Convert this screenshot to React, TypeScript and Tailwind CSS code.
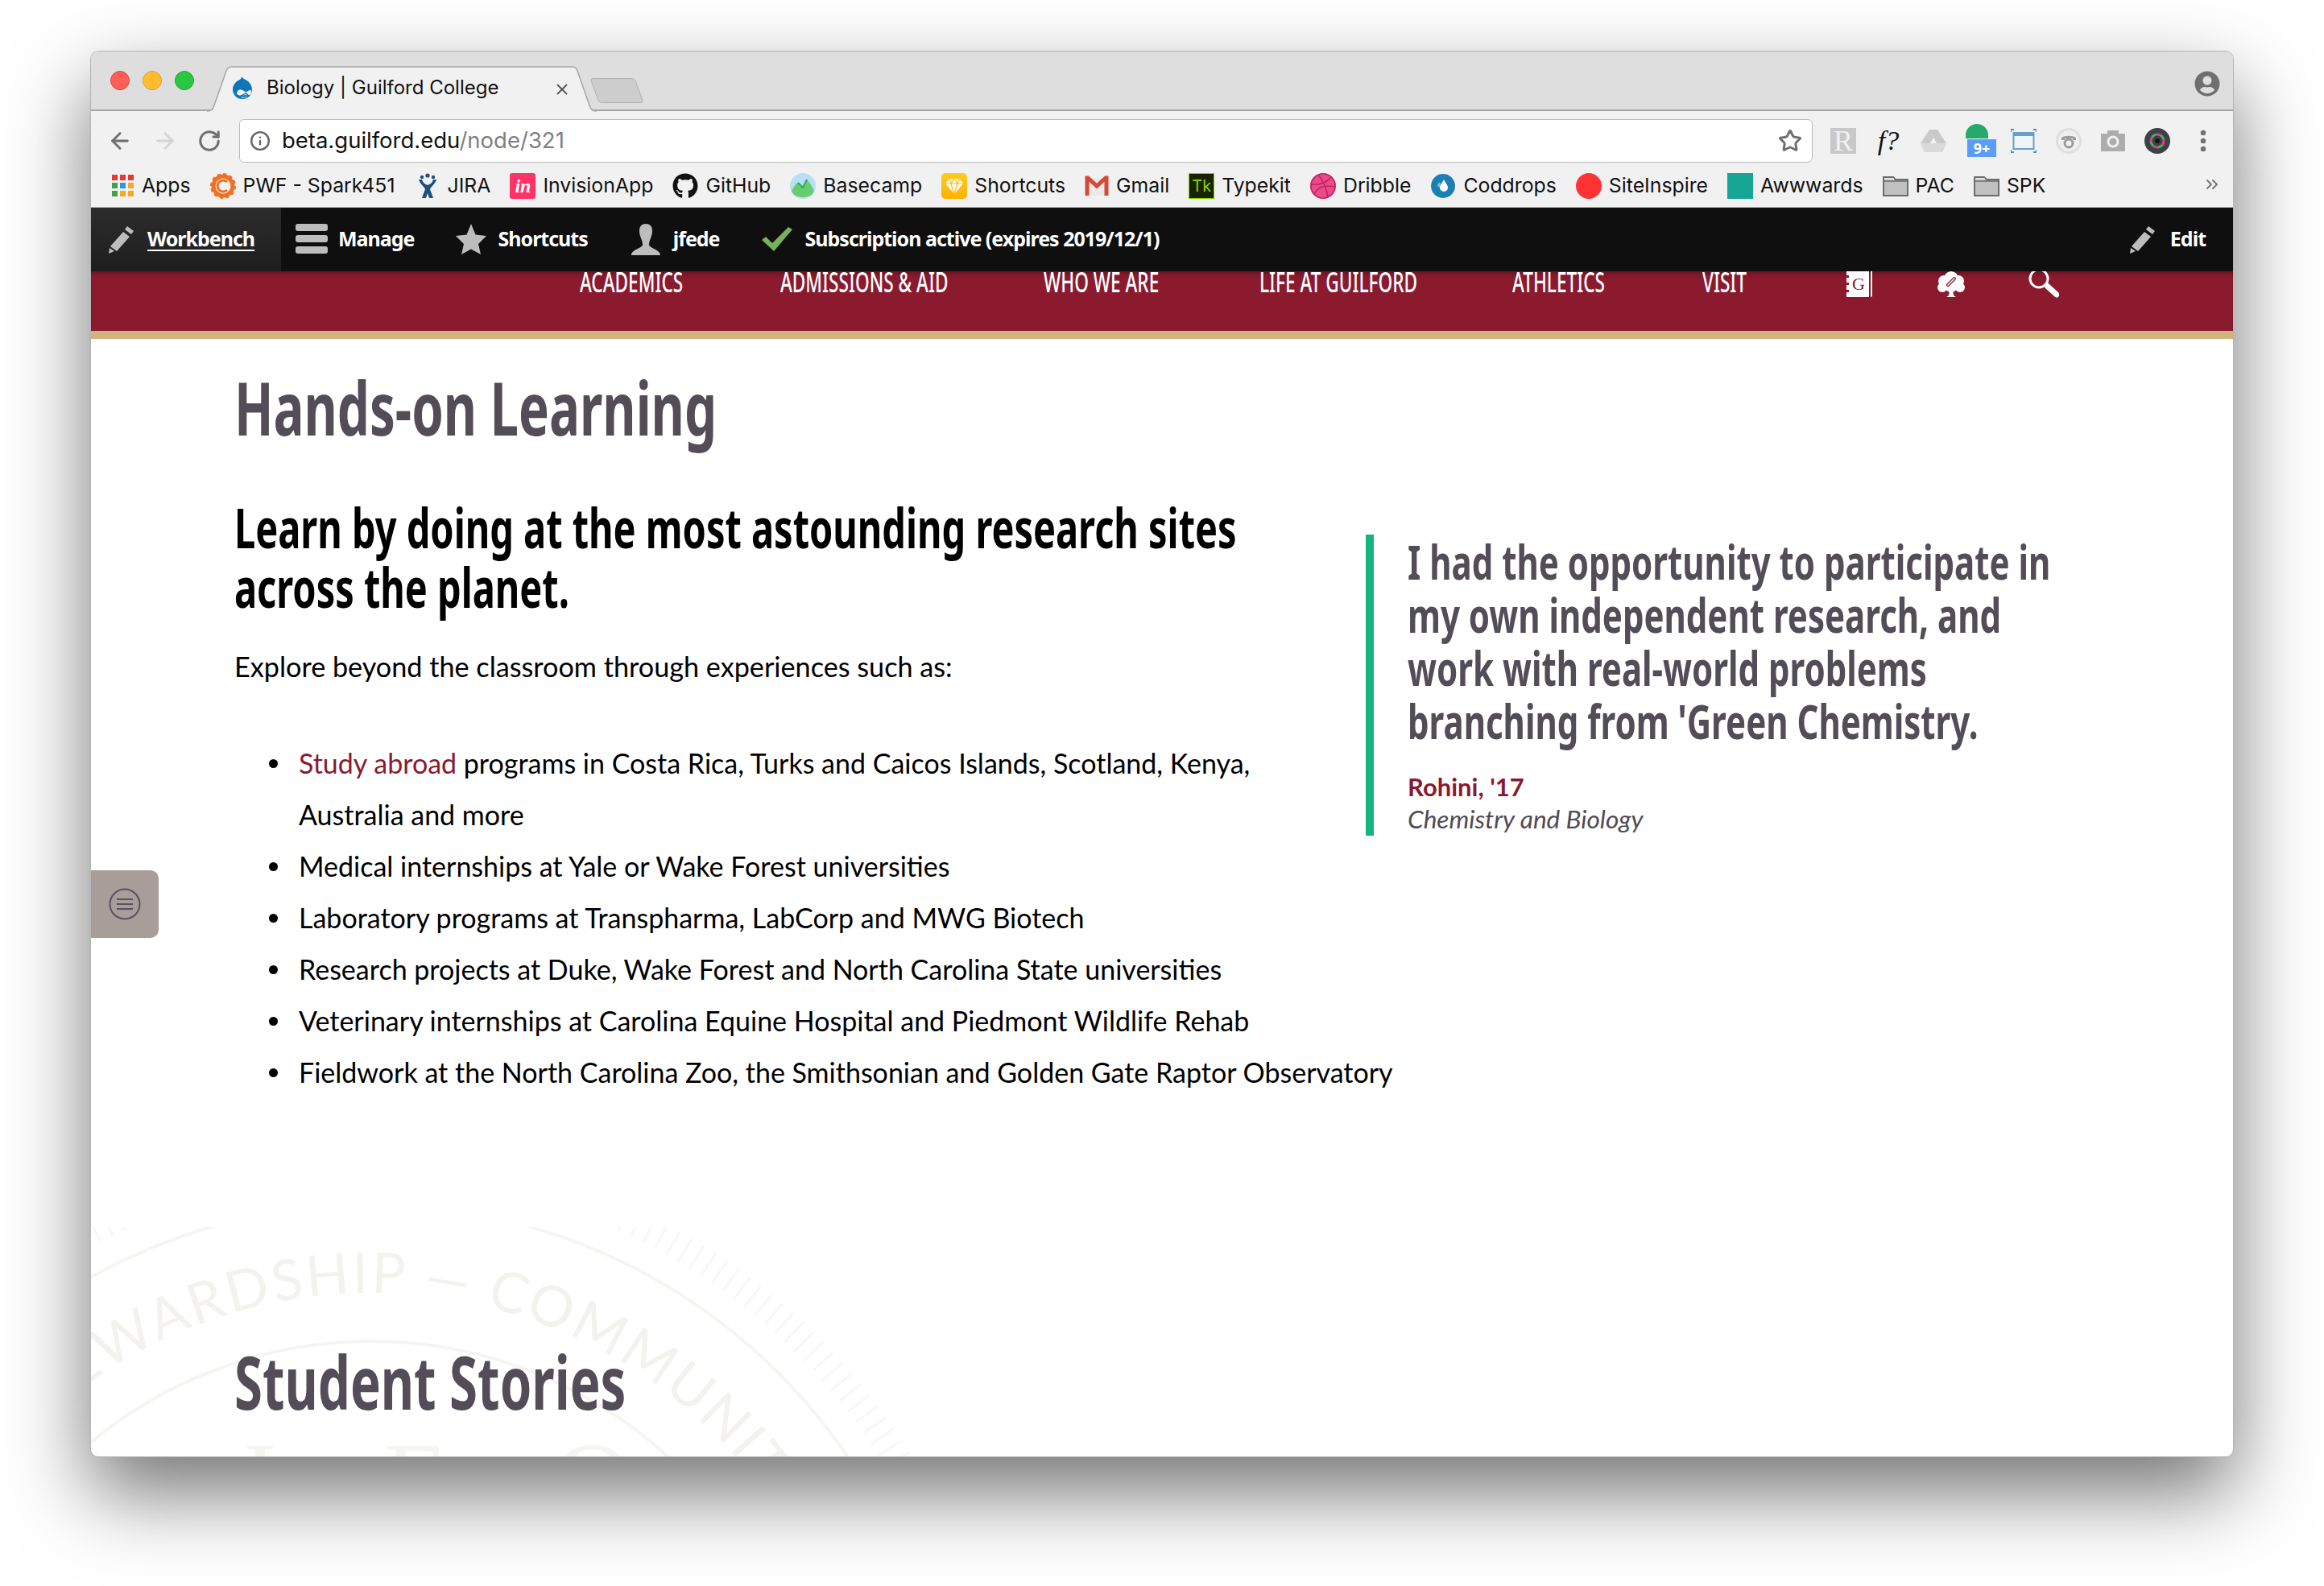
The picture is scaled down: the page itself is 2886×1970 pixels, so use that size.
import { ArrowLeft, ArrowRight, RotateCw, Info, Star, X, ChevronsRight, EllipsisVertical } from 'lucide-react'
import { FaDrupal, FaGithub, FaUserCircle } from 'react-icons/fa'

const chrome = "font-['Inter','Liberation_Sans',sans-serif]"
const cond = "font-['Noto_Sans','Open_Sans',sans-serif] origin-left whitespace-nowrap"
const body = "font-['Lato','Noto_Sans',sans-serif]"

const AppsIcon = () => (
  <svg width="28" height="32" viewBox="0 0 28 32">
    {[
      ['#e53935', '#e53935', '#e53935'],
      ['#43a047', '#2196f3', '#f9a825'],
      ['#43a047', '#f9a825', '#f9a825'],
    ].map((row, r) =>
      row.map((c, i) => <rect key={`${r}-${i}`} x={i * 10} y={2 + r * 10} width="7" height="7" fill={c} />),
    )}
  </svg>
)

const GearIcon = () => (
  <svg width="32" height="32" viewBox="0 0 32 32">
    <circle cx="16" cy="16" r="12" fill="none" stroke="#f26f21" strokeWidth="5" />
    <circle cx="16" cy="16" r="14" fill="none" stroke="#f26f21" strokeWidth="4" strokeDasharray="4 3.3" />
    <path d="M21 11a7 7 0 1 0 0 10" fill="none" stroke="#f26f21" strokeWidth="3" />
  </svg>
)

const JiraIcon = () => (
  <svg width="32" height="32" viewBox="0 0 32 32">
    <circle cx="16" cy="3" r="2.600" fill="#1d4f7c" />
    <circle cx="9" cy="5" r="2.200" fill="#1d4f7c" />
    <circle cx="23" cy="5" r="2.200" fill="#1d4f7c" />
    <path d="M5 8c2 6 6 8 8 12l-4 11h5l2-6 2 6h5l-4-11c2-4 6-6 8-12h-4c-1 4-4 6-7 7-3-1-6-3-7-7z" fill="#1d4f7c" />
  </svg>
)

const BasecampIcon = () => (
  <svg width="32" height="32" viewBox="0 0 32 32">
    <ellipse cx="16" cy="16" rx="16" ry="16" fill="#b9def7" />
    <path d="M2 22c3-5 6-10 8-10l6 6 5-10c3 3 7 9 9 14-2 6-8 8-14 8S4 28 2 22z" fill="#66cd70" />
    <path d="M10 12l6 6 5-10" fill="none" stroke="#2eaa5a" strokeWidth="2" />
  </svg>
)

const SketchIcon = () => (
  <div className="w-8 h-8 rounded-[5px] bg-gradient-to-b from-[#ffcb1f] to-[#ffb000] flex items-center justify-center">
    <svg width="24" height="22" viewBox="0 0 24 22">
      <path d="M6 2h12l5 6-11 13L1 8z" fill="#fff" />
      <path d="M1 8h22M6 2l2 6 4 13 4-13 2-6M8 8l4-6 4 6" fill="none" stroke="#ffbb00" strokeWidth="1.2" />
    </svg>
  </div>
)

const GmailIcon = () => (
  <svg width="30" height="32" viewBox="0 0 30 32">
    <rect x="1" y="6" width="28" height="22" fill="#e9e9e9" />
    <path d="M3 28V6h1l11 10L26 6h1v22" fill="none" stroke="#d34836" strokeWidth="5" />
  </svg>
)

const DribbbleIcon = () => (
  <svg width="32" height="32" viewBox="0 0 32 32">
    <circle cx="16" cy="16" r="16" fill="#ea4c89" />
    <g fill="none" stroke="#c32361" strokeWidth="1.6">
      <circle cx="16" cy="16" r="15" />
      <path d="M10 2c6 7 10 16 12 28M2 14c10 1 18-2 24-9M5 26c4-8 12-12 25-9" />
    </g>
  </svg>
)

const CodropsIcon = () => (
  <svg width="32" height="32" viewBox="0 0 32 32">
    <circle cx="16" cy="16" r="15" fill="#1b7fb4" />
    <path d="M17 8c2 4 5 7 5 10a5 5 0 0 1-10 0c0-3 3-6 5-10z" fill="#fff" />
    <path d="M12 11c1 2 1 4 0 7-2-1-3-2-3-3 0-2 2-3 3-4z" fill="#7bbbe0" />
  </svg>
)

const FolderIcon = () => (
  <svg width="32" height="32" viewBox="0 0 32 32">
    <path d="M1 28V5h12l3 3h15v20z" fill="#c0c0c0" stroke="#6d6d6d" strokeWidth="2" />
    <path d="M1 10h30" stroke="#6d6d6d" strokeWidth="1.5" />
    <path d="M2 7h12" stroke="#efefef" strokeWidth="1.5" />
  </svg>
)

const bookmarks = [
  { label: 'Apps', icon: <AppsIcon /> },
  { label: 'PWF - Spark451', icon: <GearIcon /> },
  { label: 'JIRA', icon: <JiraIcon /> },
  {
    label: 'InvisionApp',
    icon: (
      <div className="w-8 h-8 rounded-[3px] bg-[#ff3366] text-white flex items-center justify-center italic font-bold font-['Liberation_Serif',serif] text-[24px] leading-none">
        in
      </div>
    ),
  },
  { label: 'GitHub', icon: <FaGithub size={32} color="#111" /> },
  { label: 'Basecamp', icon: <BasecampIcon /> },
  { label: 'Shortcuts', icon: <SketchIcon /> },
  { label: 'Gmail', icon: <GmailIcon /> },
  {
    label: 'Typekit',
    icon: (
      <div className="w-8 h-8 bg-[#1a2200] border border-[#7fd000] text-[#86d900] flex items-center justify-center text-[20px] leading-none">
        Tk
      </div>
    ),
  },
  { label: 'Dribble', icon: <DribbbleIcon /> },
  { label: 'Coddrops', icon: <CodropsIcon /> },
  { label: 'SiteInspire', icon: <div className="w-8 h-8 rounded-full bg-[#ff3333]" /> },
  { label: 'Awwwards', icon: <div className="w-8 h-8 bg-[#17a695]" /> },
  { label: 'PAC', icon: <FolderIcon /> },
  { label: 'SPK', icon: <FolderIcon /> },
]

const Pencil = ({ color = '#bdbdbd' }: { color?: string }) => (
  <svg width="36" height="36" viewBox="0 0 36 36">
    <path d="M25 2l8 6-3 4-8-6zM20 9l8 6-16 18-8-6z" fill={color} />
    <path d="M3 29l6 4-7 3z" fill={color} />
  </svg>
)

const extensions = [
  <div key="r" className="w-8 h-8 bg-[#c8c8c8] text-[#f1f1f1] font-['Liberation_Serif',serif] text-[36px] leading-[33px] text-center">R</div>,
  <div key="f" className="w-8 text-center font-['Liberation_Serif',serif] italic text-[34px] leading-none text-[#111] whitespace-nowrap">f?</div>,
  <svg key="d" width="32" height="28" viewBox="0 0 32 28">
    <path d="M11 0h10l11 17-5 11H5L0 17z" fill="#c9c9c9" />
    <path d="M16 10l-5 8h10z" fill="#f1f1f1" />
    <path d="M0 17l5 11h22l5-11z" fill="#dadada" />
  </svg>,
  <div key="g" className="relative w-8 h-[42px]">
    <div className="absolute left-0 top-0 w-[28px] h-[18px] rounded-t-full bg-[#26a96c]" />
    <div className="absolute left-[2px] top-[19px] w-9 h-[22px] bg-[#5a9cf8] text-white text-[18px] leading-[22px] font-bold text-center">9+</div>
  </div>,
  <svg key="w" width="32" height="30" viewBox="0 0 32 30">
    <path d="M0 4V1h4M28 1h4v3M32 26v3h-4M4 29H0v-3" fill="none" stroke="#4b93c3" strokeWidth="2" />
    <rect x="3.500" y="5" width="25" height="20" fill="#eef4f8" stroke="#6a9fc5" strokeWidth="2" />
    <rect x="3" y="5" width="26" height="4" fill="#6a9fc5" />
  </svg>,
  <svg key="p" width="32" height="32" viewBox="0 0 32 32">
    <circle cx="16" cy="16" r="16" fill="#dedede" />
    <circle cx="16" cy="16" r="13" fill="#efefef" />
    <path d="M7 12c4-3 14-3 18 0v3h-4v-2h-10v2H7z" fill="#9c9c9c" />
    <circle cx="16" cy="19" r="5" fill="none" stroke="#9c9c9c" strokeWidth="3" />
  </svg>,
  <svg key="c" width="30" height="28" viewBox="0 0 30 28">
    <path d="M8 1h14v4h8v22H0V5h8z" fill="#adadad" />
    <circle cx="15" cy="15" r="6" fill="none" stroke="#f1f1f1" strokeWidth="3" />
  </svg>,
  <svg key="l" width="32" height="32" viewBox="0 0 32 32">
    <circle cx="16" cy="16" r="16" fill="#3e4148" />
    <circle cx="16" cy="16" r="8" fill="none" stroke="#e23d8d" strokeWidth="3" strokeDasharray="6 6" />
    <circle cx="16" cy="16" r="8" fill="none" stroke="#39c14b" strokeWidth="3" strokeDasharray="6 6" strokeDashoffset="6" />
    <circle cx="16" cy="16" r="3" fill="#141414" />
  </svg>,
]

const navItems = [
  { label: 'ACADEMICS', width: 'w-[127px]' },
  { label: 'ADMISSIONS & AID', width: 'w-[206px]' },
  { label: 'WHO WE ARE', width: 'w-[146px]' },
  { label: 'LIFE AT GUILFORD', width: 'w-[193px]' },
  { label: 'ATHLETICS', width: 'w-[114px]' },
  { label: 'VISIT', width: 'w-[55px]' },
]

const listItems = [
  <>
    <span className="text-[#8b1a2f]">Study abroad</span> programs in Costa Rica, Turks and Caicos Islands, Scotland, Kenya,
    <br />
    Australia and more
  </>,
  'Medical internships at Yale or Wake Forest universities',
  'Laboratory programs at Transpharma, LabCorp and MWG Biotech',
  'Research projects at Duke, Wake Forest and North Carolina State universities',
  'Veterinary internships at Carolina Equine Hospital and Piedmont Wildlife Rehab',
  'Fieldwork at the North Carolina Zoo, the Smithsonian and Golden Gate Raptor Observatory',
]

export default function App() {
  return (
    <div className="w-[2886px] h-[1970px] bg-white pt-[63px] pl-[112px] overflow-hidden">
      <div className="relative w-[2662px] h-[1747px] rounded-[10px] overflow-hidden bg-white border border-[#b5b5b5] shadow-[0_44px_100px_rgba(0,0,0,0.55)]">
        {/* Tab strip */}
        <div className="relative h-[74px] bg-[#dedede] border-b-2 border-[#a5a5a5] flex items-center">
          <div className="flex gap-4 pl-[24px]">
            <div className="w-6 h-6 rounded-full bg-[#ff5f57] border border-[#e0443e]" />
            <div className="w-6 h-6 rounded-full bg-[#ffbd2e] border border-[#dea123]" />
            <div className="w-6 h-6 rounded-full bg-[#28c940] border border-[#1aab29]" />
          </div>
          <svg className="absolute left-[143px] top-[18px]" width="486" height="57" viewBox="0 0 486 57">
            <path d="M1 56C8 56 9 52 11 46L25 6C26 2 28 1 32 1H454C458 1 460 2 461 6L475 46C477 52 478 56 485 56" fill="#f1f1f1" stroke="#a5a5a5" strokeWidth="1.5" />
          </svg>
          <div className={`absolute left-[172px] top-[27px] flex items-center h-[36px] ${chrome}`}>
            <FaDrupal size={32} color="#0c76b8" />
            <span className="ml-[14px] text-[24px] text-[#111] whitespace-nowrap">Biology | Guilford College</span>
          </div>
          <X className="absolute left-[574px] top-[36px] text-[#555]" size={22} strokeWidth={2} />
          <div className="absolute left-[625px] top-[33px] w-[56px] h-[31px] bg-[#cdcdcd] border border-[#b0b0b0] rounded-[4px] skew-x-[20deg]" />
          <FaUserCircle className="absolute left-[2612px] top-[24px] text-[#6f6f6f]" size={32} />
        </div>

        {/* Address bar */}
        <div className="h-[74px] bg-[#f1f1f1] flex items-center pl-[20px] pr-[20px]">
          <ArrowLeft className="text-[#6f6f6f]" size={32} strokeWidth={2.2} />
          <ArrowRight className="ml-[24px] text-[#d4d4d4]" size={32} strokeWidth={2.2} />
          <RotateCw className="ml-[24px] text-[#6f6f6f]" size={30} strokeWidth={2.4} />
          <div className={`ml-[22px] w-[1956px] h-[54px] bg-white rounded-[6px] border border-[#bcbcbc] flex items-center pl-[12px] pr-[12px] ${chrome}`}>
            <Info className="text-[#666]" size={26} strokeWidth={2.2} />
            <span className="ml-[14px] text-[27.500px] text-[#111]">
              beta.guilford.edu<span className="text-[#808080]">/node/321</span>
            </span>
            <Star className="ml-auto text-[#6f6f6f]" size={30} strokeWidth={2.4} />
          </div>
          <div className="ml-[22px] flex items-center gap-[24px]">{extensions}</div>
          <EllipsisVertical className="ml-[24px] text-[#6f6f6f]" size={34} strokeWidth={2.6} />
        </div>

        {/* Bookmarks */}
        <div className={`relative h-[46px] pb-[8px] bg-[#f1f1f1] border-b border-[#b5b5b5] flex items-center pl-[26px] gap-[24px] text-[24.800px] text-[#111] ${chrome}`}>
          {bookmarks.map((b) => (
            <div key={b.label} className="flex items-center gap-[9px] whitespace-nowrap">
              {b.icon}
              <span>{b.label}</span>
            </div>
          ))}
          <ChevronsRight className="absolute left-[2622px] top-[5px] text-[#777]" size={24} />
        </div>

        {/* Admin toolbar */}
        <div className={`h-[79px] pb-[2px] bg-[#0f0f0f] flex items-center text-white font-bold text-[25px] tracking-[-1px] font-['Noto_Sans',sans-serif]`}>
          <div className="h-[79px] -mb-[2px] w-[236px] bg-gradient-to-b from-[#2c2c2c] to-[#1e1e1e] flex items-center pl-[20px] pb-[2px] gap-[14px]">
            <Pencil />
            <span className="underline underline-offset-4">Workbench</span>
          </div>
          <div className="ml-[18px] flex flex-col gap-[5px]">
            <div className="w-[40px] h-[9px] rounded-[3px] bg-[#bdbdbd]" />
            <div className="w-[40px] h-[9px] rounded-[3px] bg-[#bdbdbd]" />
            <div className="w-[40px] h-[9px] rounded-[3px] bg-[#bdbdbd]" />
          </div>
          <span className="ml-[13px]">Manage</span>
          <svg className="ml-[50px]" width="40" height="40" viewBox="0 0 40 40">
            <path d="M20 1l5.5 13.5L39 16l-10 10 3 13-12-6.500L8 39l3-13L1 16l13.500-1.500z" fill="#bdbdbd" />
          </svg>
          <span className="ml-[14px]">Shortcuts</span>
          <svg className="ml-[53px]" width="38" height="40" viewBox="0 0 38 40">
            <path d="M19 1c6 0 8 4 8 9 0 7-4 11-4 17 0 4 14 6 14 13H1c0-7 14-9 14-13 0-6-4-10-4-17 0-5 2-9 8-9z" fill="#bdbdbd" />
          </svg>
          <span className="ml-[15px]">jfede</span>
          <svg className="ml-[52px]" width="38" height="30" viewBox="0 0 38 30">
            <path d="M0 16l5-4 8 8L33 0l5 3-23 27z" fill="#77b259" />
          </svg>
          <span className="ml-[16px]">Subscription active (expires 2019/12/1)</span>
          <div className="ml-auto mr-[34px] flex items-center gap-[16px]">
            <Pencil />
            <span>Edit</span>
          </div>
        </div>

        {/* Site nav */}
        <div className="h-[74px] bg-[#8b1a2f] shadow-[inset_0_6px_6px_-4px_rgba(0,0,0,0.35)] flex items-start pl-[607px] gap-[121.600px] text-white text-[34px] leading-[26px]">
          {navItems.map((n) => (
            <div key={n.label} className={n.width}>
              <div className={`${cond} scale-x-[0.665] font-medium`}>{n.label}</div>
            </div>
          ))}
          <div className="flex items-start gap-[78px]">
            <svg width="36" height="32" viewBox="0 0 36 32">
              <rect x="2" y="0" width="28" height="32" fill="#fff" />
              <path d="M32 0h2v30c0 1-1 2-2 2z" fill="#fff" />
              <g fill="#8b1a2f">
                <rect x="0" y="5" width="5" height="3" />
                <rect x="0" y="14" width="5" height="3" />
                <rect x="0" y="23" width="5" height="3" />
              </g>
              <text x="17" y="23" textAnchor="middle" fill="#8b1a2f" fontSize="22" fontFamily="Liberation Serif, serif">G</text>
            </svg>
            <svg width="36" height="32" viewBox="0 0 36 32">
              <g fill="#fff">
                <circle cx="18" cy="9" r="9" />
                <circle cx="9" cy="12" r="7" />
                <circle cx="27" cy="12" r="7" />
                <circle cx="7" cy="20" r="6" />
                <circle cx="29" cy="20" r="6" />
                <circle cx="18" cy="18" r="8" />
                <path d="M16 24h4l1 6 3 2H12l3-2z" />
              </g>
              <path d="M14 17l8-8" stroke="#8b1a2f" strokeWidth="4" fill="none" strokeLinecap="round" />
              <path d="M14 17l8-8" stroke="#fff" strokeWidth="1.500" fill="none" strokeLinecap="round" />
            </svg>
            <svg width="38" height="34" viewBox="0 0 38 34">
              <circle cx="13" cy="9" r="11" fill="none" stroke="#fff" strokeWidth="3" />
              <path d="M23 18l12 11" stroke="#fff" strokeWidth="7" strokeLinecap="round" />
            </svg>
          </div>
        </div>
        <div className="h-[10px] bg-[#cfb47e]" />

        {/* Page body */}
        <div className="relative h-[1390px]">
          <svg className="absolute left-0 top-[1103px]" width="1200" height="290" viewBox="112 1523 1200 290">
            <g fill="none" stroke="#f6f5f2" strokeWidth="4">
              <circle cx="460" cy="2210" r="545" />
              <circle cx="460" cy="2210" r="715" />
              <circle cx="460" cy="2210" r="765" strokeWidth="34" strokeDasharray="3 14" stroke="#f8f7f5" />
            </g>
            <defs>
              <path id="seal" d="M-145 2210a605 605 0 0 1 1210 0" />
            </defs>
            <text fill="#f3f2ef" fontSize="70" letterSpacing="3" fontFamily="Lato, sans-serif">
              <textPath href="#seal" startOffset="25%">STEWARDSHIP — COMMUNITY</textPath>
            </text>
            <text fill="#f6f5f2" fontSize="130" fontFamily="Liberation Serif, serif" x="300" y="1880" letterSpacing="50">I E O</text>
          </svg>

          <div className="relative pl-[178px]">
            <h1 className={`${cond} scale-x-[0.69] pt-[25px] h-[156px] text-[92px] leading-[120px] font-bold text-[#524d57]`}>Hands-on Learning</h1>
            <div className="flex">
              <div className="w-[1405px] shrink-0">
                <h2 className={`${cond} scale-x-[0.69] mt-[41px] text-[68px] leading-[74px] font-bold text-black`}>
                  Learn by doing at the most astounding research sites
                  <br />
                  across the planet.
                </h2>
                <p className={`${body} mt-[30px] text-[34.200px] leading-[64px] text-black whitespace-nowrap`}>
                  Explore beyond the classroom through experiences such as:
                </p>
                <ul className={`${body} mt-[56px] pl-[80px] text-[34px] leading-[64px] text-black whitespace-nowrap`}>
                  {listItems.map((item, i) => (
                    <li key={i} className="relative">
                      <span className="absolute -left-[37px] top-[27px] w-[11px] h-[11px] rounded-full bg-black" />
                      {item}
                    </li>
                  ))}
                </ul>
              </div>
              <div className="mt-[87px] w-[860px] h-[374px] border-l-[10px] border-[#15b57f] pl-[42px]">
                <p className={`${cond} scale-x-[0.70] text-[60px] leading-[66px] font-bold text-[#524d57]`}>
                  I had the opportunity to participate in
                  <br />
                  my own independent research, and
                  <br />
                  work with real-world problems
                  <br />
                  branching from 'Green Chemistry.
                </p>
                <p className={`${body} mt-[29px] text-[31px] leading-[40px] font-bold text-[#8b1a2f]`}>Rohini, '17</p>
                <p className={`${body} text-[31.500px] leading-[40px] italic text-[#4f4a55]`}>Chemistry and Biology</p>
              </div>
            </div>
            <h2 className={`${cond} scale-x-[0.69] absolute left-[178px] top-[1235px] text-[92px] leading-[120px] font-bold text-[#524d57]`}>Student Stories</h2>
          </div>

          <div className="absolute left-0 top-[660px] w-[84px] h-[84px] rounded-r-[10px] bg-[#a89d98] flex items-center justify-center">
            <svg width="40" height="40" viewBox="0 0 40 40" fill="none" stroke="#5a5060" strokeWidth="2">
              <circle cx="20" cy="20" r="18.500" />
              <path d="M10 14h20M10 20h20M10 26h20" />
            </svg>
          </div>
        </div>
      </div>
    </div>
  )
}
